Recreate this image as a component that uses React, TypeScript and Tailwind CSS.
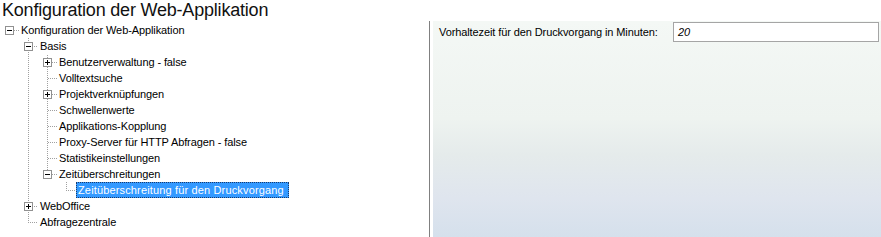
import React from "react";

type Node = { label: string; level: number; box?: "plus" | "minus"; selected?: boolean };

const nodes: Node[] = [
  { label: "Konfiguration der Web-Applikation", level: 0, box: "minus" },
  { label: "Basis", level: 1, box: "minus" },
  { label: "Benutzerverwaltung - false", level: 2, box: "plus" },
  { label: "Volltextsuche", level: 2 },
  { label: "Projektverknüpfungen", level: 2, box: "plus" },
  { label: "Schwellenwerte", level: 2 },
  { label: "Applikations-Kopplung", level: 2 },
  { label: "Proxy-Server für HTTP Abfragen - false", level: 2 },
  { label: "Statistikeinstellungen", level: 2 },
  { label: "Zeitüberschreitungen", level: 2, box: "minus" },
  { label: "Zeitüberschreitung für den Druckvorgang", level: 3, selected: true },
  { label: "WebOffice", level: 1, box: "plus" },
  { label: "Abfragezentrale", level: 1 },
];

const IND = 19;
const cxOf = (l: number) => 9 + IND * l;

function hasNextSibling(i: number): boolean {
  const l = nodes[i].level;
  for (let j = i + 1; j < nodes.length; j++) {
    if (nodes[j].level < l) return false;
    if (nodes[j].level === l) return true;
  }
  return false;
}

function ancestorIndex(i: number, level: number): number {
  for (let j = i; j >= 0; j--) if (nodes[j].level === level) return j;
  return -1;
}

function Dots({ pts }: { pts: [number, number][] }) {
  return (
    <>
      {pts.map(([x, y], k) => (
        <rect key={k} x={x} y={y} width={1} height={1} fill="#a0a0a0" />
      ))}
    </>
  );
}

function Connector({ i }: { i: number }) {
  const n = nodes[i];
  const L = n.level;
  const cx = cxOf(L);
  const w = cx + 10;
  const pts: [number, number][] = [];
  const vline = (x: number, y0: number, y1: number) => {
    for (let y = y0; y <= y1; y++) if ((x + y) % 2 === 0) pts.push([x, y]);
  };
  const hline = (x0: number, x1: number, y: number) => {
    for (let x = x0; x <= x1; x++) if ((x + y) % 2 === 0) pts.push([x, y]);
  };
  for (let k = 1; k < L; k++) {
    const a = ancestorIndex(i, k);
    if (a >= 0 && hasNextSibling(a)) vline(cxOf(k), 0, 15);
  }
  if (L >= 1) {
    if (n.box) {
      vline(cx, 0, 3);
      if (hasNextSibling(i)) vline(cx, 13, 15);
    } else {
      vline(cx, 0, hasNextSibling(i) ? 15 : 8);
    }
  }
  hline(n.box ? cx + 5 : cx, cx + 9, 8);
  return (
    <svg width={w} height={16} className="shrink-0" shapeRendering="crispEdges">
      <Dots pts={pts} />
      {n.box && (
        <>
          <rect x={cx - 4 + 0.5} y={4 + 0.5} width={8} height={8} fill="#fff" stroke="#919191" strokeWidth={1} />
          <rect x={cx - 2} y={8} width={5} height={1} fill="#000" />
          {n.box === "plus" && <rect x={cx} y={6} width={1} height={5} fill="#000" />}
        </>
      )}
    </svg>
  );
}

export default function App() {
  return (
    <div
      className="w-[881px] h-[237px] bg-white flex flex-col overflow-hidden text-black"
      style={{ fontFamily: '"Liberation Sans", Arial, sans-serif' }}
    >
      <div className="h-[21px] pl-[2px] text-[18px] leading-[20px] tracking-[-0.2px] text-[#111]">
        Konfiguration der Web-Applikation
      </div>
      <div className="flex flex-1 min-h-0">
        <div className="w-[430px] shrink-0 border-r border-[#808080] pt-[1px] text-[11px]">
          {nodes.map((n, i) => (
            <div key={i} className="flex h-[16px] items-center">
              <Connector i={i} />
              <span
                className={
                  n.selected
                    ? "h-[16px] leading-[14px] pl-[1px] pr-[4px] bg-[#3399ff] text-white border border-dotted border-[#1a3a6a] tracking-[0.15px]"
                    : "h-[16px] leading-[16px] pl-[2px] pr-[2px] tracking-[-0.1px]"
                }
              >
                {n.label}
              </span>
            </div>
          ))}
        </div>
        <div className="ml-[3px] flex-1 bg-[linear-gradient(to_bottom,#f4f8f5_0%,#eef3f0_45%,#e5ebeb_62%,#dfe5ee_82%,#d5e0ec_100%)]">
          <div className="flex items-center h-[20px] mt-[1px] pl-[6px] pr-[2px] text-[11px]">
            <span className="flex-1 tracking-[-0.1px]">Vorhaltezeit für den Druckvorgang in Minuten:</span>
            <div className="w-[206px] h-[20px] border border-[#a5a5a5] bg-white pl-[4px] leading-[18px] italic text-[11px]">
              20
            </div>
          </div>
        </div>
      </div>
    </div>
  );
}
